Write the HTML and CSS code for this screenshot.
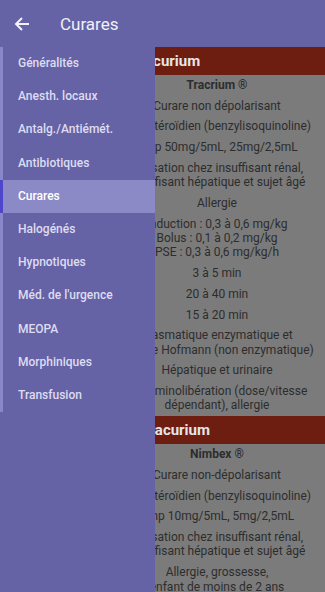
FILE: index.html
```html
<!DOCTYPE html>
<html lang="fr">
<head>
    <meta charset="UTF-8">
    <meta name="viewport" content="width=device-width, initial-scale=1.0">
    <title>Curares</title>
    <link rel="stylesheet" href="styles.css">
</head>
<body>
    <div class="toolbar">
        <svg class="back" width="16" height="16" viewBox="0 0 16 16">
            <path d="M15 8H2M8 2L2 8l6 6" fill="none" stroke="#f2f2fa" stroke-width="2"/>
        </svg>
        <span class="title">Curares</span>
    </div>

    <div class="main">
        <div class="content">
            <div class="drug-title">Atracurium</div>
            <div class="row"><span class="label">Nom commercial</span><span class="value bold">Tracrium ®</span></div>
            <div class="row"><span class="label">Classe</span><span class="value">Curare non dépolarisant</span></div>
            <div class="row"><span class="label">Structure</span><span class="value">Non stéroïdien (benzylisoquinoline)</span></div>
            <div class="row"><span class="label">Présentation</span><span class="value">Amp 50mg/5mL, 25mg/2,5mL</span></div>
            <div class="row"><span class="label">Indication</span><span class="value">Utilisation chez insuffisant rénal,<br>insuffisant hépatique et sujet âgé</span></div>
            <div class="row"><span class="label">CI</span><span class="value">Allergie</span></div>
            <div class="row"><span class="label">Posologie</span><span class="value">Induction : 0,3 à 0,6 mg/kg<br>Bolus : 0,1 à 0,2 mg/kg<br>PSE : 0,3 à 0,6 mg/kg/h</span></div>
            <div class="row"><span class="label">Délai</span><span class="value">3 à 5 min</span></div>
            <div class="row"><span class="label">Durée</span><span class="value">20 à 40 min</span></div>
            <div class="row"><span class="label">Demi-vie</span><span class="value">15 à 20 min</span></div>
            <div class="row"><span class="label">Métabolisme</span><span class="value">Plasmatique enzymatique et<br>voie de Hofmann (non enzymatique)</span></div>
            <div class="row"><span class="label">Élimination</span><span class="value">Hépatique et urinaire</span></div>
            <div class="row"><span class="label">Effets</span><span class="value">Histaminolibération (dose/vitesse<br>dépendant), allergie</span></div>

            <div class="drug-title">Cisatracurium</div>
            <div class="row"><span class="label">Nom commercial</span><span class="value bold">Nimbex ®</span></div>
            <div class="row"><span class="label">Classe</span><span class="value">Curare non-dépolarisant</span></div>
            <div class="row"><span class="label">Structure</span><span class="value">Non stéroïdien (benzylisoquinoline)</span></div>
            <div class="row"><span class="label">Présentation</span><span class="value">Amp 10mg/5mL, 5mg/2,5mL</span></div>
            <div class="row"><span class="label">Indication</span><span class="value">Utilisation chez insuffisant rénal,<br>insuffisant hépatique et sujet âgé</span></div>
            <div class="row"><span class="label">CI</span><span class="value">Allergie, grossesse,<br>enfant de moins de 2 ans</span></div>
        </div>

        <div class="drawer">
            <ul class="menu">
                <li>Généralités</li>
                <li>Anesth. locaux</li>
                <li>Antalg./Antiémét.</li>
                <li>Antibiotiques</li>
                <li class="active">Curares</li>
                <li>Halogénés</li>
                <li>Hypnotiques</li>
                <li>Méd. de l'urgence</li>
                <li>MEOPA</li>
                <li>Morphiniques</li>
                <li>Transfusion</li>
            </ul>
        </div>
    </div>
</body>
</html>
```

FILE: styles.css
```css
body {
    margin: 0;
    padding: 0;
    font-family: Roboto, "Liberation Sans", sans-serif;
    background-color: #7b7b7b;
    overflow: hidden;
}

.toolbar {
    height: 47px;
    background-color: #6563a6;
    display: flex;
    align-items: center;
    padding-left: 14px;
}

.back {
    margin-right: 30px;
}

.title {
    color: #f0f0f8;
    font-size: 17px;
}

.main {
    position: relative;
    height: 545px;
    overflow: hidden;
}

/* contenu derriere le menu */
.content {
    color: #2d2d2d;
    font-size: 12px;
}

.drug-title {
    background-color: #6e1d11;
    color: #e6e6e6;
    font-size: 15px;
    font-weight: 700;
    height: 28px;
    line-height: 28px;
    text-align: center;
}

.row {
    display: grid;
    grid-template-columns: 117px 200px;
    padding: 3px 0 3.3px;
    line-height: 14.4px;
}

.row .label {
    visibility: hidden;
}

.row .value {
    text-align: center;
    white-space: nowrap;
}

.value.bold {
    font-weight: 700;
}

.drawer {
    position: absolute;
    top: 0;
    left: 0;
    bottom: 0;
    width: 155px;
    background-color: #6563a5;
}

.menu {
    list-style: none;
    margin: 0;
    padding: 0;
    border-left: 3px solid #8987c9;
}

.menu li {
    height: 33.2px;
    line-height: 33.2px;
    padding-left: 15px;
    font-size: 12px;
    font-weight: 500;
    color: #dedcf2;
}

.menu li.active {
    background-color: #8b89c6;
    color: #ffffff;
    margin-left: -3px;
    border-left: 3px solid #4e47c9;
}
```
